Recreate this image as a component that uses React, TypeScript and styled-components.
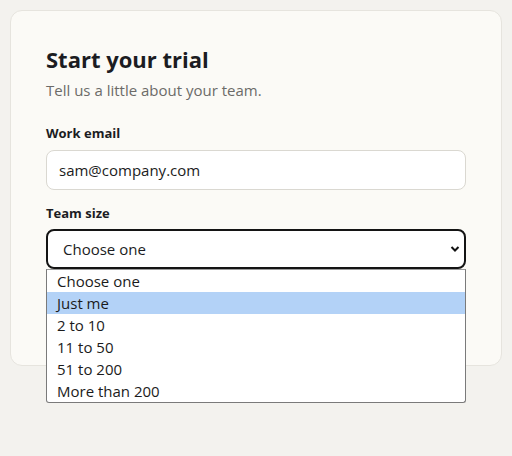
import React from "react";
import styled, { createGlobalStyle } from "styled-components";

const GlobalStyle = createGlobalStyle`
  html, body {
    margin: 0;
    padding: 0;
    background: #f3f2ee;
  }
  body {
    font-family: "Open Sans", "Noto Sans", sans-serif;
    color: #1b1c22;
  }
`;

const Page = styled.div`
  padding: 10px;
  height: 456px;
  box-sizing: border-box;
`;

const Card = styled.form`
  background: #fbfaf6;
  border: 1px solid #e6e4de;
  border-radius: 12px;
  padding: 33px 35px 36px;
  display: flex;
  flex-direction: column;
`;

const Title = styled.h1`
  margin: 0;
  font-size: 22px;
  line-height: 30px;
  font-weight: 700;
  color: #1b1c22;
`;

const Subtitle = styled.p`
  margin: 5px 0 0;
  font-size: 15px;
  line-height: 22px;
  color: #6c6b68;
`;

const Label = styled.label<{ $gap: number }>`
  display: block;
  margin-top: ${(p) => p.$gap}px;
  font-size: 13px;
  line-height: 18px;
  font-weight: 700;
  color: #1b1c22;
`;

const Input = styled.input`
  display: block;
  box-sizing: border-box;
  width: 100%;
  height: 40px;
  margin-top: 8px;
  padding: 0 12px;
  border: 1px solid #dad8d1;
  border-radius: 8px;
  background: #ffffff;
  font-family: inherit;
  font-size: 15px;
  color: #1b1c22;
  outline: none;
`;

const SelectWrap = styled.div`
  position: relative;
  margin-top: 7px;
`;

const Select = styled.select`
  display: block;
  box-sizing: border-box;
  width: 100%;
  height: 40px;
  padding: 0 30px 0 15px;
  border: 2px solid #141414;
  border-radius: 8px;
  background: #ffffff;
  font-family: inherit;
  font-size: 15px;
  color: #1b1c22;
  appearance: none;
  outline: none;
`;

const Chevron = styled.svg`
  position: absolute;
  right: 6px;
  top: 16px;
  width: 10px;
  height: 8px;
  pointer-events: none;
`;

const Listbox = styled.ul`
  position: absolute;
  left: 0;
  right: 0;
  top: 40px;
  margin: 0;
  padding: 0;
  list-style: none;
  background: #ffffff;
  border: 1px solid #7a7a7a;
  border-top-color: #9a9a9a;
  border-radius: 0 0 3px 3px;
  z-index: 2;
`;

const Option = styled.li<{ $active?: boolean }>`
  height: 22px;
  line-height: 22px;
  padding: 0 10px;
  font-size: 15px;
  color: #1b1b1b;
  background: ${(p) => (p.$active ? "#b3d2f7" : "transparent")};
`;

const Submit = styled.button`
  margin-top: 16px;
  height: 44px;
  border: 0;
  border-radius: 8px;
  background: #1b1c22;
  color: #ffffff;
  font-family: inherit;
  font-size: 15px;
  font-weight: 700;
`;

const sizes = ["Choose one", "Just me", "2 to 10", "11 to 50", "51 to 200", "More than 200"];

export default function App() {
  return (
    <>
      <GlobalStyle />
      <Page>
        <Card onSubmit={(e) => e.preventDefault()}>
          <Title>Start your trial</Title>
          <Subtitle>Tell us a little about your team.</Subtitle>

          <Label $gap={23} htmlFor="email">Work email</Label>
          <Input id="email" type="email" defaultValue="sam@company.com" />

          <Label $gap={14} htmlFor="size">Team size</Label>
          <SelectWrap>
            <Select id="size" defaultValue="Choose one">
              {sizes.map((s) => (
                <option key={s}>{s}</option>
              ))}
            </Select>
            <Chevron viewBox="0 0 10 8">
              <path d="M1.5 2 L5 5.5 L8.5 2" fill="none" stroke="#111" strokeWidth="2" />
            </Chevron>
            <Listbox role="listbox">
              {sizes.map((s) => (
                <Option key={s} $active={s === "Just me"}>
                  {s}
                </Option>
              ))}
            </Listbox>
          </SelectWrap>

          <Submit type="submit">Start trial</Submit>
        </Card>
      </Page>
    </>
  );
}
